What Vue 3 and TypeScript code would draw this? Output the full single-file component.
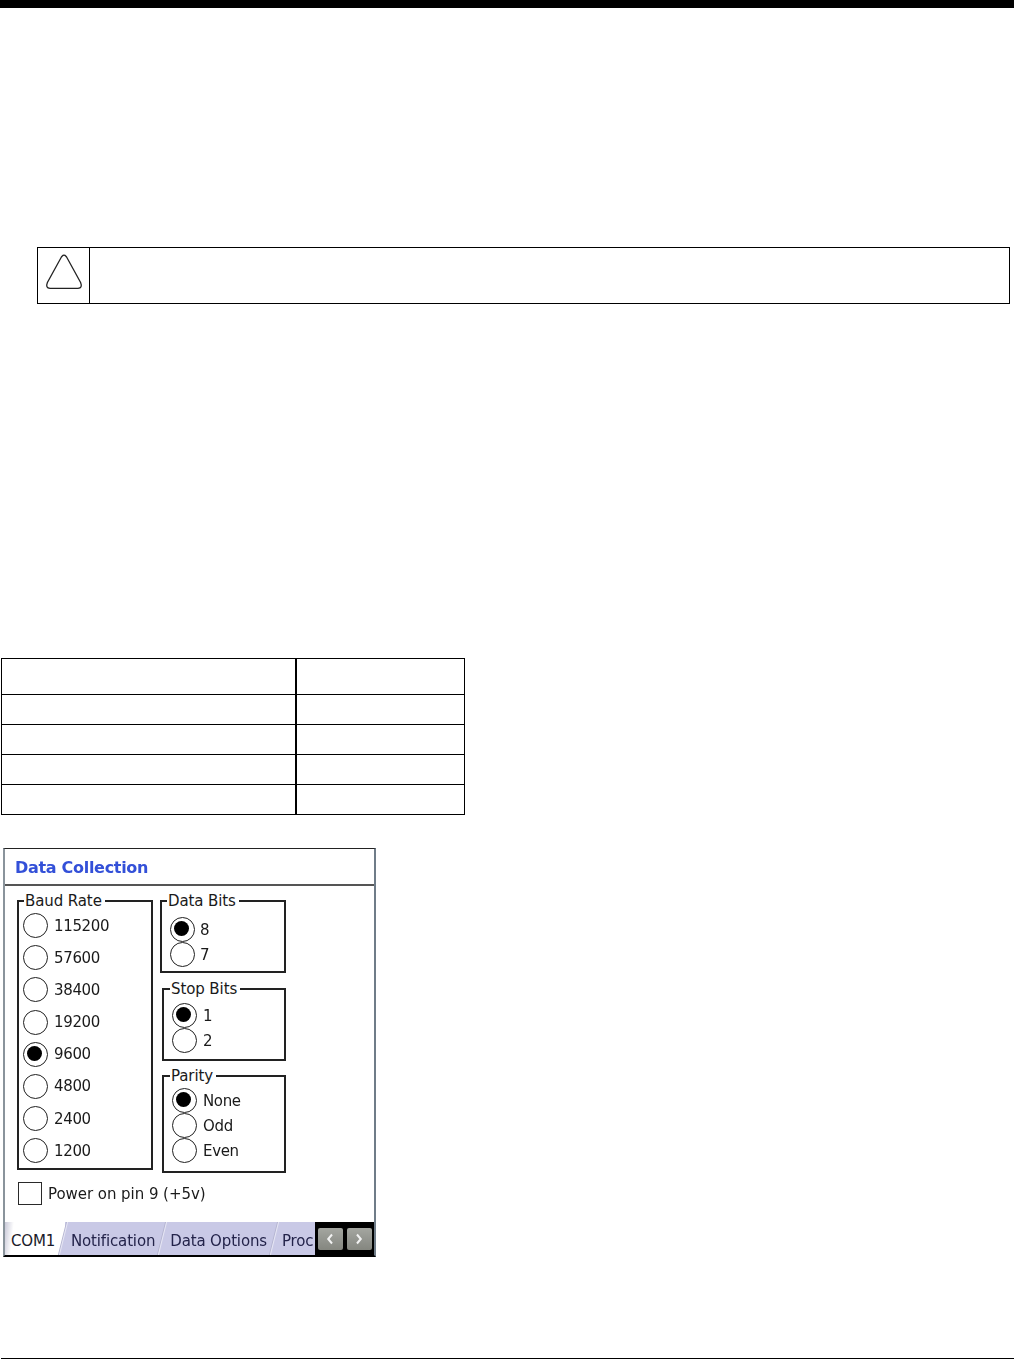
<script setup lang="ts">
const baud = [
  { label: '115200', on: false },
  { label: '57600', on: false },
  { label: '38400', on: false },
  { label: '19200', on: false },
  { label: '9600', on: true },
  { label: '4800', on: false },
  { label: '2400', on: false },
  { label: '1200', on: false },
]
const dataBits = [{ label: '8', on: true }, { label: '7', on: false }]
const stopBits = [{ label: '1', on: true }, { label: '2', on: false }]
const parity = [{ label: 'None', on: true }, { label: 'Odd', on: false }, { label: 'Even', on: false }]
const rows = [0, 1, 2, 3, 4]
const tabs = ['Notification', 'Data Options', 'Proc']
</script>

<template>
  <div class="page">
    <div class="topbar"></div>

    <div class="callout">
      <div class="callout-icon">
        <svg width="38" height="36" viewBox="0 0 38 36">
          <path d="M16.4 3 Q19 -0.6 21.6 3 L35.6 28.5 Q37.8 34 33 34.3 L5 34.3 Q0.2 34 2.4 28.5 Z" fill="none" stroke="#222" stroke-width="1.3" />
        </svg>
      </div>
      <div class="callout-body"></div>
    </div>

    <div class="table">
      <div v-for="r in rows" :key="r" class="row" :class="{ first: r === 0 }">
        <div class="cell-a"></div>
        <div class="cell-b"></div>
      </div>
    </div>

    <div class="screen">
      <div class="title">Data Collection</div>
      <div class="content">
        <div class="groups">
          <div class="group baud">
            <span class="legend">Baud Rate</span>
            <div v-for="o in baud" :key="o.label" class="opt">
              <span class="radio" :class="{ on: o.on }"></span>
              <span>{{ o.label }}</span>
            </div>
          </div>
          <div class="side">
            <div class="group bits">
              <span class="legend">Data Bits</span>
              <div v-for="o in dataBits" :key="o.label" class="opt tight">
                <span class="radio" :class="{ on: o.on }"></span>
                <span>{{ o.label }}</span>
              </div>
            </div>
            <div class="group stop">
              <span class="legend shifted">Stop Bits</span>
              <div v-for="o in stopBits" :key="o.label" class="opt tight wide">
                <span class="radio" :class="{ on: o.on }"></span>
                <span>{{ o.label }}</span>
              </div>
            </div>
            <div class="group parity">
              <span class="legend shifted">Parity</span>
              <div v-for="o in parity" :key="o.label" class="opt tight wide">
                <span class="radio" :class="{ on: o.on }"></span>
                <span>{{ o.label }}</span>
              </div>
            </div>
          </div>
        </div>
        <div class="check">
          <span class="box"></span>
          <span>Power on pin 9 (+5v)</span>
        </div>
      </div>
      <div class="tabbar">
        <div class="tab active">COM1</div>
        <div v-for="t in tabs" :key="t" class="tab">{{ t }}</div>
        <div class="arrows">
          <span class="arrow">
            <svg width="10" height="12" viewBox="0 0 10 12"><path d="M7 1.5 L3.2 6 L7 10.5" fill="none" stroke="#f2f2f2" stroke-width="2" /></svg>
          </span>
          <span class="arrow">
            <svg width="10" height="12" viewBox="0 0 10 12"><path d="M3 1.5 L6.8 6 L3 10.5" fill="none" stroke="#f2f2f2" stroke-width="2" /></svg>
          </span>
        </div>
      </div>
    </div>

    <div class="footer"></div>
  </div>
</template>

<style scoped>
.page {
  width: 1014px;
  height: 1359px;
  background: #fff;
  overflow: hidden;
  display: flex;
  flex-direction: column;
  font-family: "DejaVu Sans", sans-serif;
  color: #1a1a1a;
}
.topbar {
  height: 8px;
  background: #000;
  flex: none;
}
.callout {
  margin: 239px 0 0 37px;
  width: 973px;
  height: 57px;
  box-sizing: border-box;
  border: 1px solid #000;
  display: flex;
  flex: none;
}
.callout-icon {
  width: 52px;
  border-right: 1px solid #000;
  display: flex;
  justify-content: center;
  padding-top: 6px;
  box-sizing: border-box;
  flex: none;
}
.callout-body {
  flex: 1;
}
.table {
  margin: 354px 0 0 1px;
  width: 464px;
  box-sizing: border-box;
  border-top: 1px solid #000;
  border-left: 1px solid #000;
  border-right: 1px solid #000;
  flex: none;
}
.row {
  height: 30px;
  box-sizing: border-box;
  border-bottom: 1px solid #000;
  display: flex;
}
.row.first {
  height: 36px;
}
.cell-a {
  width: 293px;
  border-right: 2px solid #000;
  flex: none;
}
.cell-b {
  flex: 1;
}
.screen {
  margin: 33px 0 0 3px;
  width: 373px;
  height: 409px;
  box-sizing: border-box;
  border-top: 1px solid #222;
  border-left: 2px solid #8a949c;
  border-right: 2px solid #6f7c88;
  border-bottom: 2px solid #000;
  display: flex;
  flex-direction: column;
  flex: none;
  font-size: 15px;
  letter-spacing: -0.35px;
  filter: blur(0.35px);
}
.title {
  height: 37px;
  box-sizing: border-box;
  border-bottom: 2px solid #555;
  padding: 2px 0 0 10px;
  line-height: 34px;
  color: #3350d8;
  font-weight: 700;
  font-size: 16px;
  letter-spacing: -0.3px;
  flex: none;
}
.content {
  flex: 1;
  padding: 14px 0 0 12px;
  box-sizing: border-box;
}
.groups {
  display: flex;
  align-items: flex-start;
  gap: 7px;
}
.group {
  position: relative;
  box-sizing: border-box;
  border: 2px solid #222;
}
.legend {
  position: absolute;
  top: -10px;
  left: 5px;
  height: 18px;
  line-height: 18px;
  padding: 0 3px 0 1px;
  background: #fff;
  white-space: nowrap;
  letter-spacing: -0.1px;
}
.legend.shifted {
  left: 6px;
}
.baud {
  width: 136px;
  height: 270px;
  padding: 11px 0 0 4px;
  display: flex;
  flex-direction: column;
  gap: 7.2px;
}
.side {
  display: flex;
  flex-direction: column;
  align-items: flex-start;
}
.bits {
  width: 126px;
  height: 73px;
  padding: 15px 0 0 8px;
}
.stop {
  width: 124px;
  height: 73px;
  margin: 15px 0 0 2px;
  padding: 13px 0 0 8px;
}
.parity {
  width: 124px;
  height: 98px;
  margin: 14px 0 0 2px;
  padding: 11px 0 0 8px;
}
.opt {
  display: flex;
  align-items: center;
  height: 25px;
  gap: 6px;
}
.opt.tight {
  gap: 5px;
}
.opt.wide {
  gap: 6px;
}
.radio {
  width: 25px;
  height: 25px;
  box-sizing: border-box;
  border: 1.8px solid #1f1f1f;
  border-radius: 50%;
  background: #fff;
  position: relative;
  flex: none;
}
.radio.on::after {
  content: "";
  position: absolute;
  left: 3.1px;
  top: 3.1px;
  width: 15px;
  height: 15px;
  border-radius: 50%;
  background: #000;
}
.check {
  margin: 9px 0 0 1px;
  display: flex;
  align-items: center;
  gap: 6px;
  letter-spacing: -0.05px;
}
.box {
  width: 24px;
  height: 23px;
  box-sizing: border-box;
  border: 1.8px solid #2a2a2a;
  flex: none;
}
.tabbar {
  height: 33px;
  flex: none;
  display: flex;
  background: #c9c9e6;
  position: relative;
  overflow: hidden;
  letter-spacing: -0.15px;
}
.tab {
  position: relative;
  display: flex;
  align-items: center;
  padding: 4px 9px 0 6px;
  box-sizing: border-box;
  white-space: nowrap;
  color: #23234a;
}
.tab::before {
  content: "";
  position: absolute;
  left: -2px;
  top: 0;
  bottom: 0;
  width: 6px;
  background: #c9c9e6;
  border-left: 1.5px solid #e6e6f4;
  box-shadow: -1px 0 0 #b4b4d0;
  transform: skewX(-14deg);
}
.tab.active {
  width: 60px;
  padding-left: 6px;
  color: #1a1a2a;
  background: linear-gradient(96deg, #c9c9d8 0, #ffffff 9px);
}
.tab.active::before {
  display: none;
}
.arrows {
  position: absolute;
  right: 0;
  top: 0;
  bottom: 0;
  width: 59px;
  background: #000;
  display: flex;
  align-items: flex-start;
  justify-content: center;
  gap: 4px;
  padding-top: 6px;
  box-sizing: border-box;
}
.arrow {
  width: 25px;
  height: 22px;
  background: linear-gradient(#a4a6a0, #84867f);
  border-radius: 2px;
  display: flex;
  align-items: center;
  justify-content: center;
}
.footer {
  margin: 101px 0 0 1px;
  width: 1013px;
  height: 1px;
  background: #000;
  flex: none;
}
</style>
